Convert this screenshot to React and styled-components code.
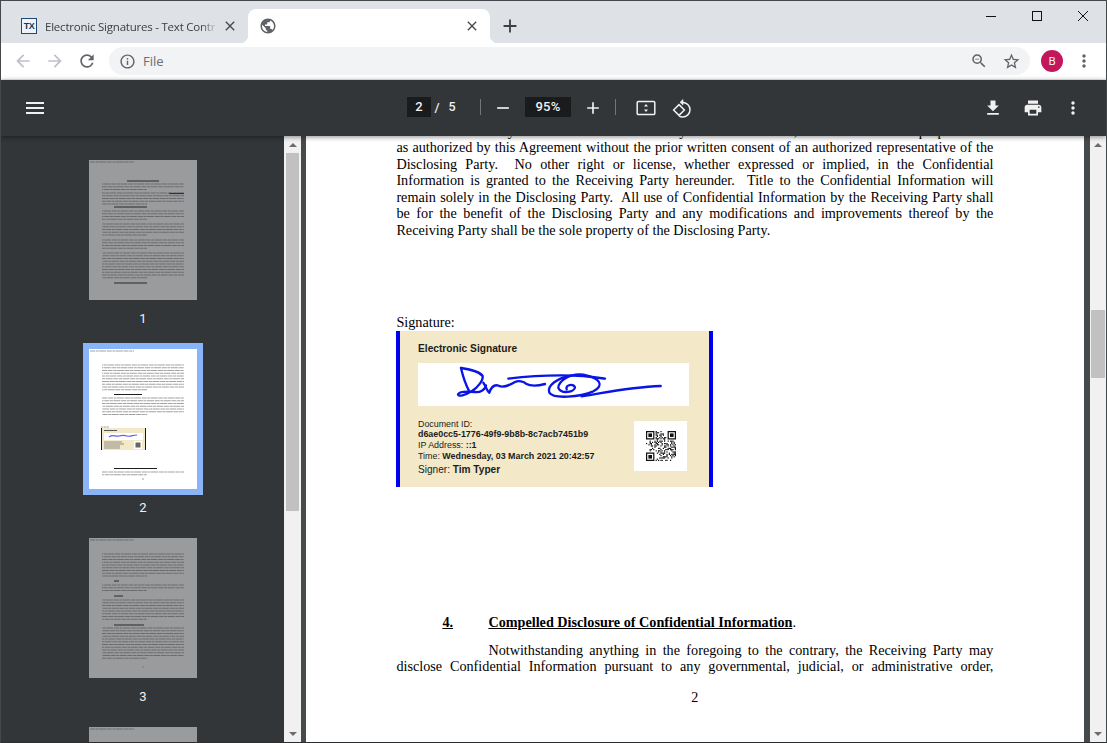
import React from "react";
import styled, { createGlobalStyle } from "styled-components";
import {
  MdAdd,
  MdArrowBack,
  MdArrowForward,
  MdClose,
  MdFileDownload,
  MdInfoOutline,
  MdMenu,
  MdMoreVert,
  MdPrint,
  MdPublic,
  MdRefresh,
  MdRemove,
  MdStarBorder,
  MdZoomOut,
} from "react-icons/md";

const GlobalStyle = createGlobalStyle`
  html, body {
    margin: 0;
    padding: 0;
    height: 100%;
    overflow: hidden;
  }
`;

const Window = styled.div`
  box-sizing: border-box;
  width: 1107px;
  height: 743px;
  border: 1px solid #45484b;
  border-bottom-color: #2c2e30;
  display: flex;
  flex-direction: column;
  overflow: hidden;
  font-family: "Open Sans", "Liberation Sans", sans-serif;
  background: #323639;
`;

/* browser chrome */
const TabStrip = styled.div`
  height: 42px;
  flex: none;
  background: #dee1e6;
  display: flex;
  align-items: flex-end;
  padding-left: 8px;
`;

const Tab = styled.div`
  position: relative;
  box-sizing: border-box;
  height: 34px;
  width: ${({ $active }) => ($active ? "242px" : "239px")};
  padding: 0 10px 0 12px;
  display: flex;
  align-items: center;
  background: ${({ $active }) => ($active ? "#fff" : "transparent")};
  border-radius: 8px 8px 0 0;

  ${({ $active }) =>
    $active &&
    `
    &::before, &::after {
      content: "";
      position: absolute;
      bottom: 0;
      width: 8px;
      height: 8px;
    }
    &::before {
      left: -8px;
      background: radial-gradient(circle at 0 0, transparent 8px, #fff 8.5px);
    }
    &::after {
      right: -8px;
      background: radial-gradient(circle at 100% 0, transparent 8px, #fff 8.5px);
    }
  `}
`;

const Favicon = styled.span`
  box-sizing: border-box;
  flex: none;
  width: 16px;
  height: 16px;
  border: 1px solid #1f4a78;
  background: #eef3f7;
  color: #17365c;
  font: 700 9px/14px "Liberation Sans", sans-serif;
  letter-spacing: -0.5px;
  text-align: center;
`;

const TabTitle = styled.span`
  flex: 1;
  margin-left: 8px;
  font-size: 11.5px;
  letter-spacing: -0.22px;
  color: #3c4043;
  white-space: nowrap;
  overflow: hidden;
  -webkit-mask-image: linear-gradient(to right, #000 90%, transparent 100%);
  mask-image: linear-gradient(to right, #000 90%, transparent 100%);
`;

const TabClose = styled(MdClose)`
  flex: none;
  font-size: 16px;
  color: #45484c;
  margin-left: 4px;
`;

const Globe = styled(MdPublic)`
  flex: none;
  font-size: 18px;
  margin-left: -1px;
  color: #5f6368;
`;

const NewTab = styled(MdAdd)`
  font-size: 22px;
  color: #3c4043;
  margin: 0 0 6px 9px;
`;

const WindowControls = styled.div`
  margin-left: auto;
  align-self: flex-start;
  display: flex;
`;

const WindowButton = styled.div`
  width: 46px;
  height: 29px;
  display: flex;
  align-items: center;
  justify-content: center;
`;

const Toolbar = styled.div`
  height: 36px;
  flex: none;
  background: #fff;
  border-bottom: 1px solid #eceef0;
  display: flex;
  align-items: center;
  padding-left: 12px;
`;

const NavIcon = styled.span`
  display: flex;
  width: 20px;
  margin-right: 12px;
  font-size: 20px;
  color: ${({ $off }) => ($off ? "#bdc1c6" : "#5f6368")};
`;

const Omnibox = styled.div`
  width: 921px;
  height: 28px;
  padding: 0 9px 0 10px;
  box-sizing: border-box;
  border-radius: 14px;
  background: #f1f3f4;
  display: flex;
  align-items: center;
  color: #5f6368;
`;

const OmniText = styled.span`
  margin-left: 7px;
  font-size: 13px;
  color: #6b6e71;
  flex: 1;
`;

const OmniStar = styled(MdStarBorder)`
  font-size: 19px;
  margin-left: 14px;
`;

const Avatar = styled.span`
  width: 22px;
  height: 22px;
  margin-left: 11px;
  border-radius: 50%;
  background: #c2185b;
  color: #fff;
  font-size: 11px;
  line-height: 22px;
  text-align: center;
`;

const ChromeMenu = styled(MdMoreVert)`
  font-size: 20px;
  color: #5f6368;
  margin-left: 11px;
`;

/* pdf viewer toolbar */
const PdfBar = styled.div`
  position: relative;
  z-index: 2;
  height: 56px;
  flex: none;
  background: #323639;
  box-shadow: 0 1px 5px rgba(0, 0, 0, 0.45);
  display: flex;
  align-items: center;
  padding-left: 22px;
  color: #f1f1f1;
  font-family: Roboto, "Liberation Sans", sans-serif;
`;

const BarIcon = styled.span`
  flex: none;
  display: flex;
  width: 24px;
  height: 24px;
  margin-left: ${({ $ml }) => $ml || 0}px;
  font-size: 24px;
  color: #f1f1f1;
`;

const SmallBarIcon = styled(BarIcon)`
  align-items: center;
  justify-content: center;
  font-size: 20px;
`;

const NumBox = styled.span`
  flex: none;
  box-sizing: border-box;
  height: 20px;
  width: ${({ $w }) => $w}px;
  margin: -2px 0 0 ${({ $ml }) => $ml || 0}px;
  background: #191b1c;
  font-size: 13px;
  font-weight: 500;
  line-height: 20px;
  text-align: center;
  letter-spacing: 0.3px;
`;

const Slash = styled.span`
  flex: none;
  width: 12px;
  text-align: center;
  font-size: 13px;
  font-weight: 500;
  margin-top: -2px;
`;

const Total = styled.span`
  flex: none;
  width: 16px;
  margin: -3px 0 0 1px;
  text-align: center;
  font-size: 12.5px;
  font-weight: 500;
`;

const BarDivider = styled.span`
  flex: none;
  width: 1px;
  height: 16px;
  margin-left: ${({ $ml }) => $ml}px;
  margin-top: -2px;
  background: #70757a;
`;

const RightGroup = styled.div`
  margin-left: auto;
  margin-right: 21px;
  display: flex;
  gap: 16px;
`;

/* body */
const Content = styled.div`
  flex: 1;
  min-height: 0;
  display: flex;
`;

const Sidebar = styled.div`
  width: 283px;
  flex: none;
  box-sizing: border-box;
  padding: 18px 0 0 1px;
  overflow: hidden;
  background: #323639;
`;

const ThumbItem = styled.div`
  height: 189px;
  display: flex;
  flex-direction: column;
  align-items: center;
`;

const ThumbFrame = styled.div`
  width: 108px;
  height: 140px;
  flex: none;
  border: 6px solid ${({ $active }) => ($active ? "#8ab4f8" : "transparent")};
`;

const ThumbPage = styled.svg`
  display: block;
  width: 108px;
  height: 140px;
  opacity: ${({ $active }) => ($active ? 1 : 0.5)};
`;

const ThumbText = styled.g`
  filter: blur(0.4px);
`;

const ThumbLabel = styled.div`
  margin-top: 5px;
  font: 400 13px/16px Roboto, "Liberation Sans", sans-serif;
  color: #f1f1f1;
`;

const Scrollbar = styled.div`
  flex: none;
  width: ${({ $w }) => $w}px;
  background: #f1f1f1;
  display: flex;
  flex-direction: column;
  align-items: center;
  overflow: hidden;
`;

const ScrollArrow = styled.span`
  flex: none;
  width: 0;
  height: 0;
  margin: ${({ $down }) => ($down ? "auto 0 6px" : "7px 0 0")};
  border-left: 4px solid transparent;
  border-right: 4px solid transparent;
  ${({ $down }) => ($down ? "border-top" : "border-bottom")}: 4px solid #6c6c6c;
`;

const ScrollThumb = styled.span`
  flex: none;
  width: ${({ $w }) => $w}px;
  height: ${({ $h }) => $h}px;
  margin-top: ${({ $top }) => $top}px;
  background: #c1c1c1;
`;

const Viewer = styled.div`
  flex: 1;
  min-width: 0;
  display: flex;
  padding-left: 5px;
  background: #454a4d;
  overflow: hidden;
`;

const Page = styled.div`
  width: 778px;
  box-sizing: border-box;
  padding-left: 90.4px;
  background: #fff;
  color: #000;
  font: 14.2px/16.5px "Liberation Serif", "Times New Roman", serif;
`;

const TextBlock = styled.div`
  width: 597px;
  margin-top: ${({ $top }) => $top}px;
`;

const Line = styled.div`
  ${({ $left }) => ($left ? "white-space: nowrap;" : "text-align: justify; text-align-last: justify;")}
`;

const Indented = styled(Line)`
  padding-left: 92px;
`;

const SignatureLabel = styled.div`
  margin-top: 76px;
`;

const SigCard = styled.div`
  box-sizing: border-box;
  width: 317px;
  height: 156px;
  margin-left: -0.4px;
  padding: 11px 20px 0 18px;
  border-left: 4px solid #0000f0;
  border-right: 4px solid #0000f0;
  background: #f3e8c7;
  font-family: "Liberation Sans", Arial, sans-serif;
  color: #1c1c1c;
`;

const SigTitle = styled.div`
  font-size: 10.2px;
  line-height: 13px;
  font-weight: 700;
`;

const SigImage = styled.svg`
  display: block;
  width: 271px;
  height: 43px;
  margin-top: 8px;
  background: #fff;
`;

const SigDetails = styled.div`
  display: flex;
  justify-content: space-between;
  align-items: flex-start;
  margin-top: 12px;
`;

const SigFacts = styled.div`
  font-size: 8.9px;
  line-height: 10.7px;
  padding-top: 1px;
`;

const SignerLine = styled.div`
  font-size: 10.1px;
  line-height: 13px;
  margin-top: 2px;
`;

const QrBox = styled.div`
  width: 53px;
  height: 50px;
  margin: 3px 2px 0 0;
  background: #fff;
  display: flex;
  align-items: center;
  justify-content: center;
`;

const Heading = styled.div`
  margin-top: 127px;
  display: flex;
  font-weight: 700;
`;

const HeadingNum = styled.span`
  width: 46px;
  margin-left: 46px;
  text-decoration: underline;
`;

const HeadingText = styled.span`
  text-decoration: underline;
`;

const HeadingStop = styled.span`
  font-weight: 400;
`;

const PageNumber = styled.div`
  width: 597px;
  margin-top: 14px;
  text-align: center;
`;

const upperLines = [
  "shall not reveal any Confidential Information by sale or otherwise, or use it for other purposes not",
  "as authorized by this Agreement without the prior written consent of an authorized representative of the",
  "Disclosing Party.\u00a0 No other right or license, whether expressed or implied, in the Confidential",
  "Information is granted to the Receiving Party hereunder.\u00a0 Title to the Confidential Information will",
  "remain solely in the Disclosing Party.\u00a0 All use of Confidential Information by the Receiving Party shall",
  "be for the benefit of the Disclosing Party and any modifications and improvements thereof by the",
];

function textRows(rows) {
  return rows.map(([y, x1, x2, heavy], i) => (
    <line
      key={i}
      x1={x1}
      x2={x2}
      y1={y}
      y2={y}
      stroke={heavy ? "#111" : "#555"}
      strokeWidth={heavy ? 1 : 1.1}
      strokeDasharray={heavy ? undefined : "5 0.6 3 0.5 7 0.7"}
      strokeDashoffset={i * 3.7}
      opacity={heavy ? 0.95 : 0.55}
    />
  ));
}

function block(y, count, x1 = 13, x2 = 95, step = 2.75) {
  const out = [];
  for (let i = 0; i < count; i++) {
    const last = i === count - 1;
    out.push([y + i * step, x1, last ? x1 + (x2 - x1) * 0.55 : x2]);
  }
  return out;
}

const header = [[2, 1, 45]];

const pageOneRows = [
  ...header,
  [21, 38, 70, true],
  ...block(24, 3),
  ...block(33, 5),
  [47, 25, 58, true],
  ...block(51, 4),
  ...block(64, 5),
  ...block(80, 4),
  ...block(93, 10),
  [123, 25, 58, true],
];

const pageTwoRows = [
  ...header,
  ...block(16, 10),
  [45.5, 25, 53, true],
  ...block(49, 7),
  [78, 12, 20],
  [119.5, 25, 68, true],
  ...block(123, 2),
  [130, 53, 55],
];

const pageThreeRows = [
  ...header,
  ...block(16, 9),
  [43, 25, 30, true],
  ...block(47, 3),
  [58, 25, 34, true],
  ...block(62, 8),
  [87, 25, 55, true],
  ...block(90, 12),
  [129, 53, 55],
];

function PageThumb({ rows, active, children }) {
  return (
    <ThumbPage viewBox="0 0 108 140" $active={active}>
      <rect width="108" height="140" fill="#fff" />
      <ThumbText>
        {textRows(rows)}
        {children}
      </ThumbText>
    </ThumbPage>
  );
}

function QrCode() {
  const size = 25;
  const inFinder = (x, y) =>
    (x < 7 && y < 7) || (x > 17 && y < 7) || (x < 7 && y > 17);
  const cells = [];
  for (let y = 0; y < size; y++) {
    for (let x = 0; x < size; x++) {
      if (inFinder(x, y)) continue;
      if (x === 7 && y < 8) continue;
      if (y === 7 && (x < 8 || x > 16)) continue;
      if (x === 17 && y < 8) continue;
      if (y === 17 && x < 8) continue;
      if (x === 7 && y > 16) continue;
      const on = ((x * 7 + y * 13 + x * y * 3) ^ (x * y + 5)) % 5 < 2;
      if (on) cells.push(<rect key={`${x}-${y}`} x={x} y={y} width="1" height="1" />);
    }
  }
  const finder = (x, y) => (
    <g key={`f${x}${y}`}>
      <path d={`M${x} ${y}h7v7h-7zM${x + 1} ${y + 1}v5h5v-5z`} fillRule="evenodd" />
      <rect x={x + 2} y={y + 2} width="3" height="3" />
    </g>
  );
  return (
    <svg width="30" height="30" viewBox="0 0 25 25" fill="#111">
      {finder(0, 0)}
      {finder(18, 0)}
      {finder(0, 18)}
      {cells}
    </svg>
  );
}

function SignatureStrokes() {
  return (
    <g fill="none" stroke="#0a14e6" strokeWidth="7" strokeLinecap="round" strokeLinejoin="round">
      <path d="M33 18C38 40 48 70 58 88" />
      <path d="M33 18C60 22 90 30 98 42C100 55 85 75 65 88C45 100 25 105 24 97C28 88 55 88 75 90C90 92 108 82 108 70" />
      <path d="M100 62C108 75 112 88 118 92C122 80 128 68 142 70C155 78 175 72 195 60C205 55 222 58 228 65C240 72 262 72 285 66" />
      <path d="M175 50C240 42 330 38 400 42C430 45 450 48 465 50" />
      <path d="M365 40C320 48 290 72 298 92C310 112 390 105 430 88C465 70 450 48 400 38C360 32 325 58 325 78C335 98 375 90 375 76C370 64 345 68 350 82" />
      <path d="M395 103C450 95 540 75 632 72" />
    </g>
  );
}

function App() {
  return (
    <>
      <GlobalStyle />
      <Window>
        <TabStrip>
          <Tab>
            <Favicon>TX</Favicon>
            <TabTitle>Electronic Signatures - Text Contr</TabTitle>
            <TabClose />
          </Tab>
          <Tab $active>
            <Globe />
            <TabTitle />
            <TabClose />
          </Tab>
          <NewTab />
          <WindowControls>
            <WindowButton>
              <svg width="12" height="12" viewBox="0 0 12 12">
                <path d="M1 6.5h10" stroke="#111" fill="none" />
              </svg>
            </WindowButton>
            <WindowButton>
              <svg width="12" height="12" viewBox="0 0 12 12">
                <rect x="1.5" y="1.5" width="9" height="9" stroke="#111" fill="none" />
              </svg>
            </WindowButton>
            <WindowButton>
              <svg width="12" height="12" viewBox="0 0 12 12">
                <path d="M1 1l10 10M11 1L1 11" stroke="#111" fill="none" />
              </svg>
            </WindowButton>
          </WindowControls>
        </TabStrip>

        <Toolbar>
          <NavIcon $off>
            <MdArrowBack />
          </NavIcon>
          <NavIcon $off>
            <MdArrowForward />
          </NavIcon>
          <NavIcon>
            <MdRefresh />
          </NavIcon>
          <Omnibox>
            <MdInfoOutline size={17} />
            <OmniText>File</OmniText>
            <MdZoomOut size={18} />
            <OmniStar />
          </Omnibox>
          <Avatar>B</Avatar>
          <ChromeMenu />
        </Toolbar>

        <PdfBar>
          <BarIcon>
            <MdMenu />
          </BarIcon>
          <NumBox $w={24} $ml={360}>2</NumBox>
          <Slash>/</Slash>
          <Total>5</Total>
          <BarDivider $ml={20} />
          <SmallBarIcon $ml={10}>
            <MdRemove />
          </SmallBarIcon>
          <NumBox $w={46} $ml={10}>95%</NumBox>
          <SmallBarIcon $ml={10}>
            <MdAdd />
          </SmallBarIcon>
          <BarDivider $ml={10} />
          <BarIcon $ml={18}>
            <svg width="24" height="24" viewBox="0 0 24 24" fill="none">
              <rect x="3.2" y="5.4" width="17.6" height="13.2" rx="1.2" stroke="#f1f1f1" strokeWidth="1.5" />
              <path d="M12 8l2 2.4h-4zM12 16l-2-2.4h4z" fill="#f1f1f1" />
            </svg>
          </BarIcon>
          <BarIcon $ml={12}>
            <svg width="24" height="24" viewBox="0 0 24 24" fill="none" stroke="#f1f1f1" strokeWidth="1.5">
              <path d="M3.6 14l5.4-5.4 5.4 5.4-5.4 5.4z" />
              <path d="M12.6 6.4c4 0 7.4 3.3 7.4 7.3 0 4.1-3.3 7.3-7.4 7.3-1.4 0-2.5-.3-3.4-.9" />
              <path d="M13 3.6v5.4L10 6.3z" fill="#f1f1f1" strokeWidth="0.6" />
            </svg>
          </BarIcon>
          <RightGroup>
            <SmallBarIcon>
              <MdFileDownload />
            </SmallBarIcon>
            <SmallBarIcon>
              <MdPrint />
            </SmallBarIcon>
            <SmallBarIcon>
              <MdMoreVert />
            </SmallBarIcon>
          </RightGroup>
        </PdfBar>

        <Content>
          <Sidebar>
            <ThumbItem>
              <ThumbFrame>
                <PageThumb rows={pageOneRows}>
                  <line x1="80" x2="95" y1="33.5" y2="33.5" stroke="#1a2a9a" strokeWidth="1.2" />
                </PageThumb>
              </ThumbFrame>
              <ThumbLabel>1</ThumbLabel>
            </ThumbItem>
            <ThumbItem>
              <ThumbFrame $active>
                <PageThumb rows={pageTwoRows} active>
                  <rect x="12" y="79" width="45" height="22" fill="#f3e8c7" />
                  <path d="M12.5 79v22M56.5 79v22" stroke="#0000d0" strokeWidth="1" />
                  <rect x="15" y="84" width="39" height="7" fill="#fff" />
                  <line x1="15" x2="28" y1="81.5" y2="81.5" stroke="#555" />
                  <path d="M20 88c4-3 6 0 10-1s5-1 8 0 6-1 10-1" stroke="#5566ee" strokeWidth="1.2" fill="none" />
                  <path d="M15 93h18M15 95h20M15 97h16M15 99h16" stroke="#777" strokeWidth="0.8" />
                  <rect x="45" y="92" width="8" height="8" fill="#fff" />
                  <rect x="46.5" y="93.5" width="5" height="5" fill="#666" />
                </PageThumb>
              </ThumbFrame>
              <ThumbLabel>2</ThumbLabel>
            </ThumbItem>
            <ThumbItem>
              <ThumbFrame>
                <PageThumb rows={pageThreeRows} />
              </ThumbFrame>
              <ThumbLabel>3</ThumbLabel>
            </ThumbItem>
            <ThumbItem>
              <ThumbFrame>
                <PageThumb rows={header} />
              </ThumbFrame>
            </ThumbItem>
          </Sidebar>
          <Scrollbar $w={17}>
            <ScrollArrow />
            <ScrollThumb $w={13} $h={358} $top={6} />
            <ScrollArrow $down />
          </Scrollbar>

          <Viewer>
            <Page>
              <TextBlock $top={-13.5}>
                {upperLines.map((text) => (
                  <Line key={text}>{text}</Line>
                ))}
                <Line $left>Receiving Party shall be the sole property of the Disclosing Party.</Line>
              </TextBlock>
              <SignatureLabel>Signature:</SignatureLabel>
              <SigCard>
                <SigTitle>Electronic Signature</SigTitle>
                <SigImage viewBox="-96 3 813 129">
                  <SignatureStrokes />
                </SigImage>
                <SigDetails>
                  <SigFacts>
                    <div>Document ID:</div>
                    <div>
                      <b>d6ae0cc5-1776-49f9-9b8b-8c7acb7451b9</b>
                    </div>
                    <div>
                      IP Address: <b>::1</b>
                    </div>
                    <div>
                      Time: <b>Wednesday, 03 March 2021 20:42:57</b>
                    </div>
                    <SignerLine>
                      Signer: <b>Tim Typer</b>
                    </SignerLine>
                  </SigFacts>
                  <QrBox>
                    <QrCode />
                  </QrBox>
                </SigDetails>
              </SigCard>
              <Heading>
                <HeadingNum>4.</HeadingNum>
                <HeadingText>Compelled Disclosure of Confidential Information</HeadingText>
                <HeadingStop>.</HeadingStop>
              </Heading>
              <TextBlock $top={11.5}>
                <Indented>Notwithstanding anything in the foregoing to the contrary, the Receiving Party may</Indented>
                <Line>disclose Confidential Information pursuant to any governmental, judicial, or administrative order,</Line>
              </TextBlock>
              <PageNumber>2</PageNumber>
            </Page>
          </Viewer>
          <Scrollbar $w={16}>
            <ScrollArrow />
            <ScrollThumb $w={14} $h={68} $top={163} />
            <ScrollArrow $down />
          </Scrollbar>
        </Content>
      </Window>
    </>
  );
}

export default App;
